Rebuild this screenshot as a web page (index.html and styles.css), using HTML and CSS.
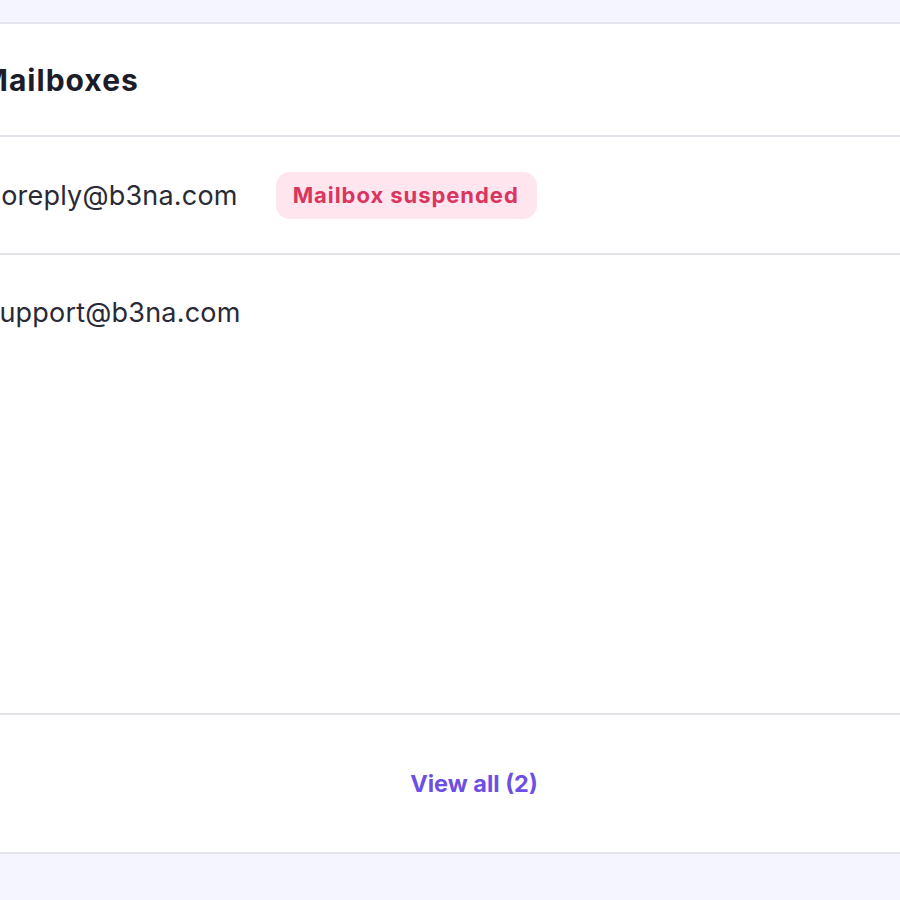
FILE: index.html
```html
<!DOCTYPE html>
<html lang="en">
<head>
<meta charset="utf-8">
<title>Mailboxes</title>
<link rel="stylesheet" href="styles.css">
</head>
<body>
<div class="page">
  <section class="card">
    <header class="card-header">
      <h2 class="card-title">Mailboxes</h2>
    </header>
    <ul class="mailbox-list">
      <li class="mailbox-row">
        <span class="mailbox-address">noreply@b3na.com</span>
        <span class="badge badge-danger">Mailbox suspended</span>
      </li>
      <li class="mailbox-row">
        <span class="mailbox-address">support@b3na.com</span>
      </li>
    </ul>
    <footer class="card-footer">
      <a class="view-all" href="#">View all (2)</a>
    </footer>
  </section>
</div>
</body>
</html>
```

FILE: styles.css
```css
html, body {
  margin: 0;
  padding: 0;
}
body {
  background: #f4f5fe;
  font-family: Inter, "Noto Sans", "Liberation Sans", sans-serif;
  color: #24242f;
  overflow: hidden;
}
.page {
  padding-top: 22px;
  padding-bottom: 40px;
}
.card {
  margin: 0 -100px 0 -52px;
  background: #ffffff;
  border-top: 2px solid #e4e4ec;
  border-bottom: 2px solid #e4e4ec;
}
.card-header {
  height: 113px;
  padding: 0 36px 0 32px;
  display: flex;
  align-items: center;
  border-bottom: 2px solid #e2e2e8;
  box-sizing: border-box;
}
.card-title {
  margin: 0;
  font-size: 30px;
  font-weight: 700;
  color: #1c1c2a;
  letter-spacing: 1px;
}
.mailbox-list {
  list-style: none;
  margin: 0;
  padding: 0;
  height: 576px;
  border-bottom: 2px solid #e2e2e8;
}
.mailbox-row {
  height: 116px;
  padding: 0 37px;
  display: flex;
  align-items: center;
  gap: 38px;
  box-sizing: border-box;
}
.mailbox-row + .mailbox-row {
  border-top: 2px solid #e2e2e8;
}
.mailbox-address {
  font-size: 27px;
  font-weight: 400;
  color: #2a2a36;
  letter-spacing: 0.2px;
}
.badge {
  display: inline-flex;
  align-items: center;
  height: 47px;
  padding: 0 18px 0 17px;
  border-radius: 14px;
  font-size: 22px;
  font-weight: 700;
  letter-spacing: 0.95px;
  box-sizing: border-box;
}
.badge-danger {
  background: #ffe5ee;
  color: #d8365f;
}
.card-footer {
  height: 137px;
  display: flex;
  align-items: center;
  justify-content: center;
}
.view-all {
  font-size: 23.5px;
  font-weight: 700;
  color: #6e4fe3;
  text-decoration: none;
}
```
